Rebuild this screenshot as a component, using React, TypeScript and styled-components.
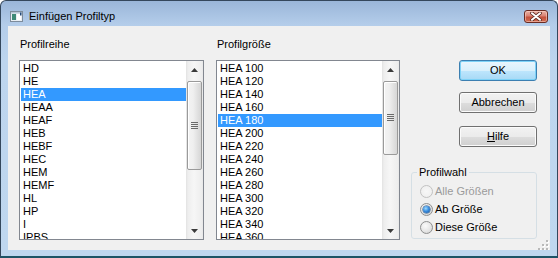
import React from 'react';
import styled, { createGlobalStyle } from 'styled-components';

const Global = createGlobalStyle`
  html, body { margin: 0; padding: 0; background: #ffffff; }
  body { font-family: "Liberation Sans", Arial, sans-serif; font-size: 11px; color: #000; }
  * { box-sizing: border-box; }
`;

const Window = styled.div`
  width: 558px;
  height: 258px;
  border: 1px solid #34475c;
  border-bottom: 2px solid #1d5466;
  border-radius: 6px 6px 0 0;
  background: linear-gradient(to bottom, #9ab6d9 0px, #b4cdea 24px, #bdd5ee 60px, #bfd7ef 100%);
  display: flex;
  flex-direction: column;
  overflow: hidden;
`;

const TitleBar = styled.div`
  height: 25px;
  flex: none;
  display: flex;
  align-items: center;
  padding: 5px 0 0 9px;
`;

const TitleText = styled.span`
  margin-left: 6px;
  line-height: 13px;
  font-size: 11px;
  flex: 1;
`;

const CloseButton = styled.div`
  align-self: flex-start;
  margin: 4px 9px 0 0;
  width: 24px;
  height: 13px;
  border: 1px solid #6a2b22;
  border-radius: 3px;
  background: linear-gradient(to bottom, #eab2a6 0%, #d98272 45%, #c4513d 55%, #cf6a4f 100%);
  display: flex;
  align-items: center;
  justify-content: center;
  box-shadow: inset 0 0 0 1px rgba(255, 220, 210, 0.5);
`;

const FrameBody = styled.div`
  flex: 1;
  display: flex;
  padding: 0 7px 6px 7px;
`;

const Client = styled.div`
  position: relative;
  flex: 1;
  background: #f0f0f0;
  display: flex;
  align-items: flex-start;
  padding: 12px 0 0 11px;
`;

const Column = styled.div<{ $ml?: number }>`
  display: flex;
  flex-direction: column;
  margin-left: ${(p) => p.$ml ?? 0}px;
`;

const Label = styled.div`
  height: 13px;
  line-height: 13px;
  padding-left: 1px;
  margin-bottom: 9px;
`;

const ListFrame = styled.div<{ $w: number }>`
  width: ${(p) => p.$w}px;
  height: 180px;
  border: 1px solid #828790;
  background: #ffffff;
  display: flex;
  overflow: hidden;
`;

const Rows = styled.ul`
  list-style: none;
  margin: 0;
  padding: 1px 0 0 1px;
  flex: 1;
  min-width: 0;
  overflow: hidden;
`;

const Row = styled.li<{ $sel?: boolean }>`
  height: 13px;
  line-height: 13px;
  padding-left: 2px;
  white-space: nowrap;
  background: ${(p) => (p.$sel ? '#3399ff' : 'transparent')};
  color: ${(p) => (p.$sel ? '#ffffff' : '#000000')};
`;

const ScrollBar = styled.div`
  width: 17px;
  flex: none;
  display: flex;
  flex-direction: column;
  background: linear-gradient(to right, #e2e2e2 0px, #eeeeee 2px, #f6f6f6 8px, #ededed 16px, #e6e6e6 17px);
`;

const ArrowButton = styled.div`
  height: 17px;
  flex: none;
  display: flex;
  align-items: center;
  justify-content: center;
`;

const Track = styled.div`
  flex: 1;
  display: flex;
  flex-direction: column;
  padding: 0 1px;
`;

const Thumb = styled.div<{ $top: number; $h: number }>`
  margin-top: ${(p) => p.$top}px;
  height: ${(p) => p.$h}px;
  border: 1px solid #9a9a9a;
  border-radius: 2px;
  background: linear-gradient(to right, #f3f3f3 0%, #efefef 40%, #e2e2e2 70%, #d6d6d6 100%);
  box-shadow: inset 1px 1px 0 #ffffff;
  display: flex;
  align-items: center;
  justify-content: center;
`;

const RightColumn = styled.div`
  width: 126px;
  margin: 22px 0 0 11px;
  display: flex;
  flex-direction: column;
  align-items: flex-end;
`;

const Button = styled.div<{ $mt: number; $default?: boolean }>`
  margin-top: ${(p) => p.$mt}px;
  width: 78px;
  height: 21px;
  border: 1px solid ${(p) => (p.$default ? '#3c7fb1' : '#707070')};
  border-radius: 3px;
  background: ${(p) =>
    p.$default
      ? 'linear-gradient(to bottom, #eaf6fd 0%, #d9f0fc 50%, #bee6fd 51%, #a7d9f5 100%)'
      : 'linear-gradient(to bottom, #f2f2f2 0%, #ebebeb 50%, #dddddd 51%, #cfcfcf 100%)'};
  box-shadow: inset 0 0 0 1px ${(p) => (p.$default ? '#7ed2f7' : '#fbfbfb')};
  display: flex;
  align-items: center;
  justify-content: center;
  line-height: 13px;
`;

const Underline = styled.span`
  text-decoration: underline;
`;

const GroupBox = styled.fieldset`
  align-self: stretch;
  margin: 19px 0 0 0;
  padding: 0 0 2px 5px;
  border: 1px solid #d5dfe5;
  border-radius: 3px;
  min-width: 0;
`;

const Legend = styled.legend`
  padding: 0 2px;
  line-height: 13px;
  height: 13px;
`;

const RadioList = styled.div`
  margin-top: 3px;
  display: flex;
  flex-direction: column;
`;

const RadioRow = styled.div<{ $disabled?: boolean }>`
  height: 18px;
  display: flex;
  align-items: center;
  padding-left: 3px;
  color: ${(p) => (p.$disabled ? '#9a9a9a' : '#000000')};
`;

const RadioCircle = styled.span<{ $disabled?: boolean }>`
  width: 13px;
  height: 13px;
  flex: none;
  border-radius: 50%;
  border: 1px solid ${(p) => (p.$disabled ? '#c2c2c2' : '#8e8f8f')};
  background: ${(p) =>
    p.$disabled
      ? 'radial-gradient(circle at 50% 50%, #f7f7f7 0%, #ededed 100%)'
      : 'radial-gradient(circle at 40% 35%, #fafafa 0%, #e6e6e6 55%, #cdcdcd 100%)'};
  display: flex;
  align-items: center;
  justify-content: center;
  margin-right: 2px;
`;

const RadioDot = styled.span`
  width: 7px;
  height: 7px;
  border-radius: 50%;
  background: radial-gradient(circle at 40% 35%, #9fdcff 0%, #3c8fe0 45%, #134d95 100%);
  box-shadow: 0 0 0 0.5px #1f4f80;
`;

const SizeGrip = styled.svg`
  position: absolute;
  right: 1px;
  bottom: 0;
`;

const leftItems = ['HD', 'HE', 'HEA', 'HEAA', 'HEAF', 'HEB', 'HEBF', 'HEC', 'HEM', 'HEMF', 'HL', 'HP', 'I', 'IPBS'];
const rightItems = [100, 120, 140, 160, 180, 200, 220, 240, 260, 280, 300, 320, 340, 360].map((n) => `HEA ${n}`);

const UpArrow = () => (
  <svg width="7" height="4" viewBox="0 0 7 4">
    <polygon points="0,4 3.5,0 7,4" fill="#3a3a3a" />
  </svg>
);
const DownArrow = () => (
  <svg width="7" height="4" viewBox="0 0 7 4">
    <polygon points="0,0 3.5,4 7,0" fill="#3a3a3a" />
  </svg>
);
const Grip = () => (
  <svg width="7" height="8" viewBox="0 0 7 8">
    {[0, 2, 4, 6].map((y) => (
      <g key={y}>
        <rect x="0" y={y} width="7" height="1" fill="#6a6a6a" />
      </g>
    ))}
  </svg>
);

type ListProps = { items: string[]; selected: number; width: number; thumbTop: number; thumbH: number };

const ListBox = ({ items, selected, width, thumbTop, thumbH }: ListProps) => (
  <ListFrame $w={width}>
    <Rows>
      {items.map((it, i) => (
        <Row key={it} $sel={i === selected}>
          {it}
        </Row>
      ))}
    </Rows>
    <ScrollBar>
      <ArrowButton>
        <UpArrow />
      </ArrowButton>
      <Track>
        <Thumb $top={thumbTop} $h={thumbH}>
          <Grip />
        </Thumb>
      </Track>
      <ArrowButton>
        <DownArrow />
      </ArrowButton>
    </ScrollBar>
  </ListFrame>
);

const AppIcon = () => (
  <svg width="13" height="11" viewBox="0 0 13 11">
    <rect x="0.5" y="0.5" width="12" height="10" fill="#e8eef4" stroke="#7d8c9c" />
    <rect x="1" y="1" width="11" height="1.5" fill="#b7c6d6" />
    <rect x="2" y="3" width="4" height="6" fill="#3f8a78" />
    <rect x="7" y="3" width="4" height="6" fill="#ffffff" />
    <rect x="10" y="1.5" width="1.5" height="3" fill="#244a7a" />
  </svg>
);

const CloseX = () => (
  <svg width="12" height="9" viewBox="0 0 12 9">
    <path d="M2 1.2 L10 7.8 M10 1.2 L2 7.8" stroke="#5a2a22" strokeWidth="3.6" strokeLinecap="round" />
    <path d="M2 1.2 L10 7.8 M10 1.2 L2 7.8" stroke="#ffffff" strokeWidth="2" strokeLinecap="round" />
  </svg>
);

export default function App() {
  return (
    <>
      <Global />
      <Window>
        <TitleBar>
          <AppIcon />
          <TitleText>Einfügen Profiltyp</TitleText>
          <CloseButton>
            <CloseX />
          </CloseButton>
        </TitleBar>
        <FrameBody>
          <Client>
            <Column>
              <Label>Profilreihe</Label>
              <ListBox items={leftItems} selected={2} width={185} thumbTop={3} thumbH={89} />
            </Column>
            <Column $ml={12}>
              <Label>Profilgröße</Label>
              <ListBox items={rightItems} selected={4} width={184} thumbTop={3} thumbH={74} />
            </Column>
            <RightColumn>
              <Button $mt={0} $default>
                OK
              </Button>
              <Button $mt={11}>Abbrechen</Button>
              <Button $mt={13}>
                <Underline>H</Underline>ilfe
              </Button>
              <GroupBox>
                <Legend>Profilwahl</Legend>
                <RadioList>
                  <RadioRow $disabled>
                    <RadioCircle $disabled />
                    Alle Größen
                  </RadioRow>
                  <RadioRow>
                    <RadioCircle>
                      <RadioDot />
                    </RadioCircle>
                    Ab Größe
                  </RadioRow>
                  <RadioRow>
                    <RadioCircle />
                    Diese Größe
                  </RadioRow>
                </RadioList>
              </GroupBox>
            </RightColumn>
            <SizeGrip width="12" height="10" viewBox="0 0 12 10">
              {[
                [9, 0],
                [9, 4],
                [5, 4],
                [9, 8],
                [5, 8],
                [1, 8],
              ].map(([x, y]) => (
                <g key={`${x}-${y}`}>
                  <rect x={x + 1} y={y + 1} width="2" height="2" fill="#ffffff" />
                  <rect x={x} y={y} width="2" height="2" fill="#b9b9b9" />
                </g>
              ))}
            </SizeGrip>
          </Client>
        </FrameBody>
      </Window>
    </>
  );
}
